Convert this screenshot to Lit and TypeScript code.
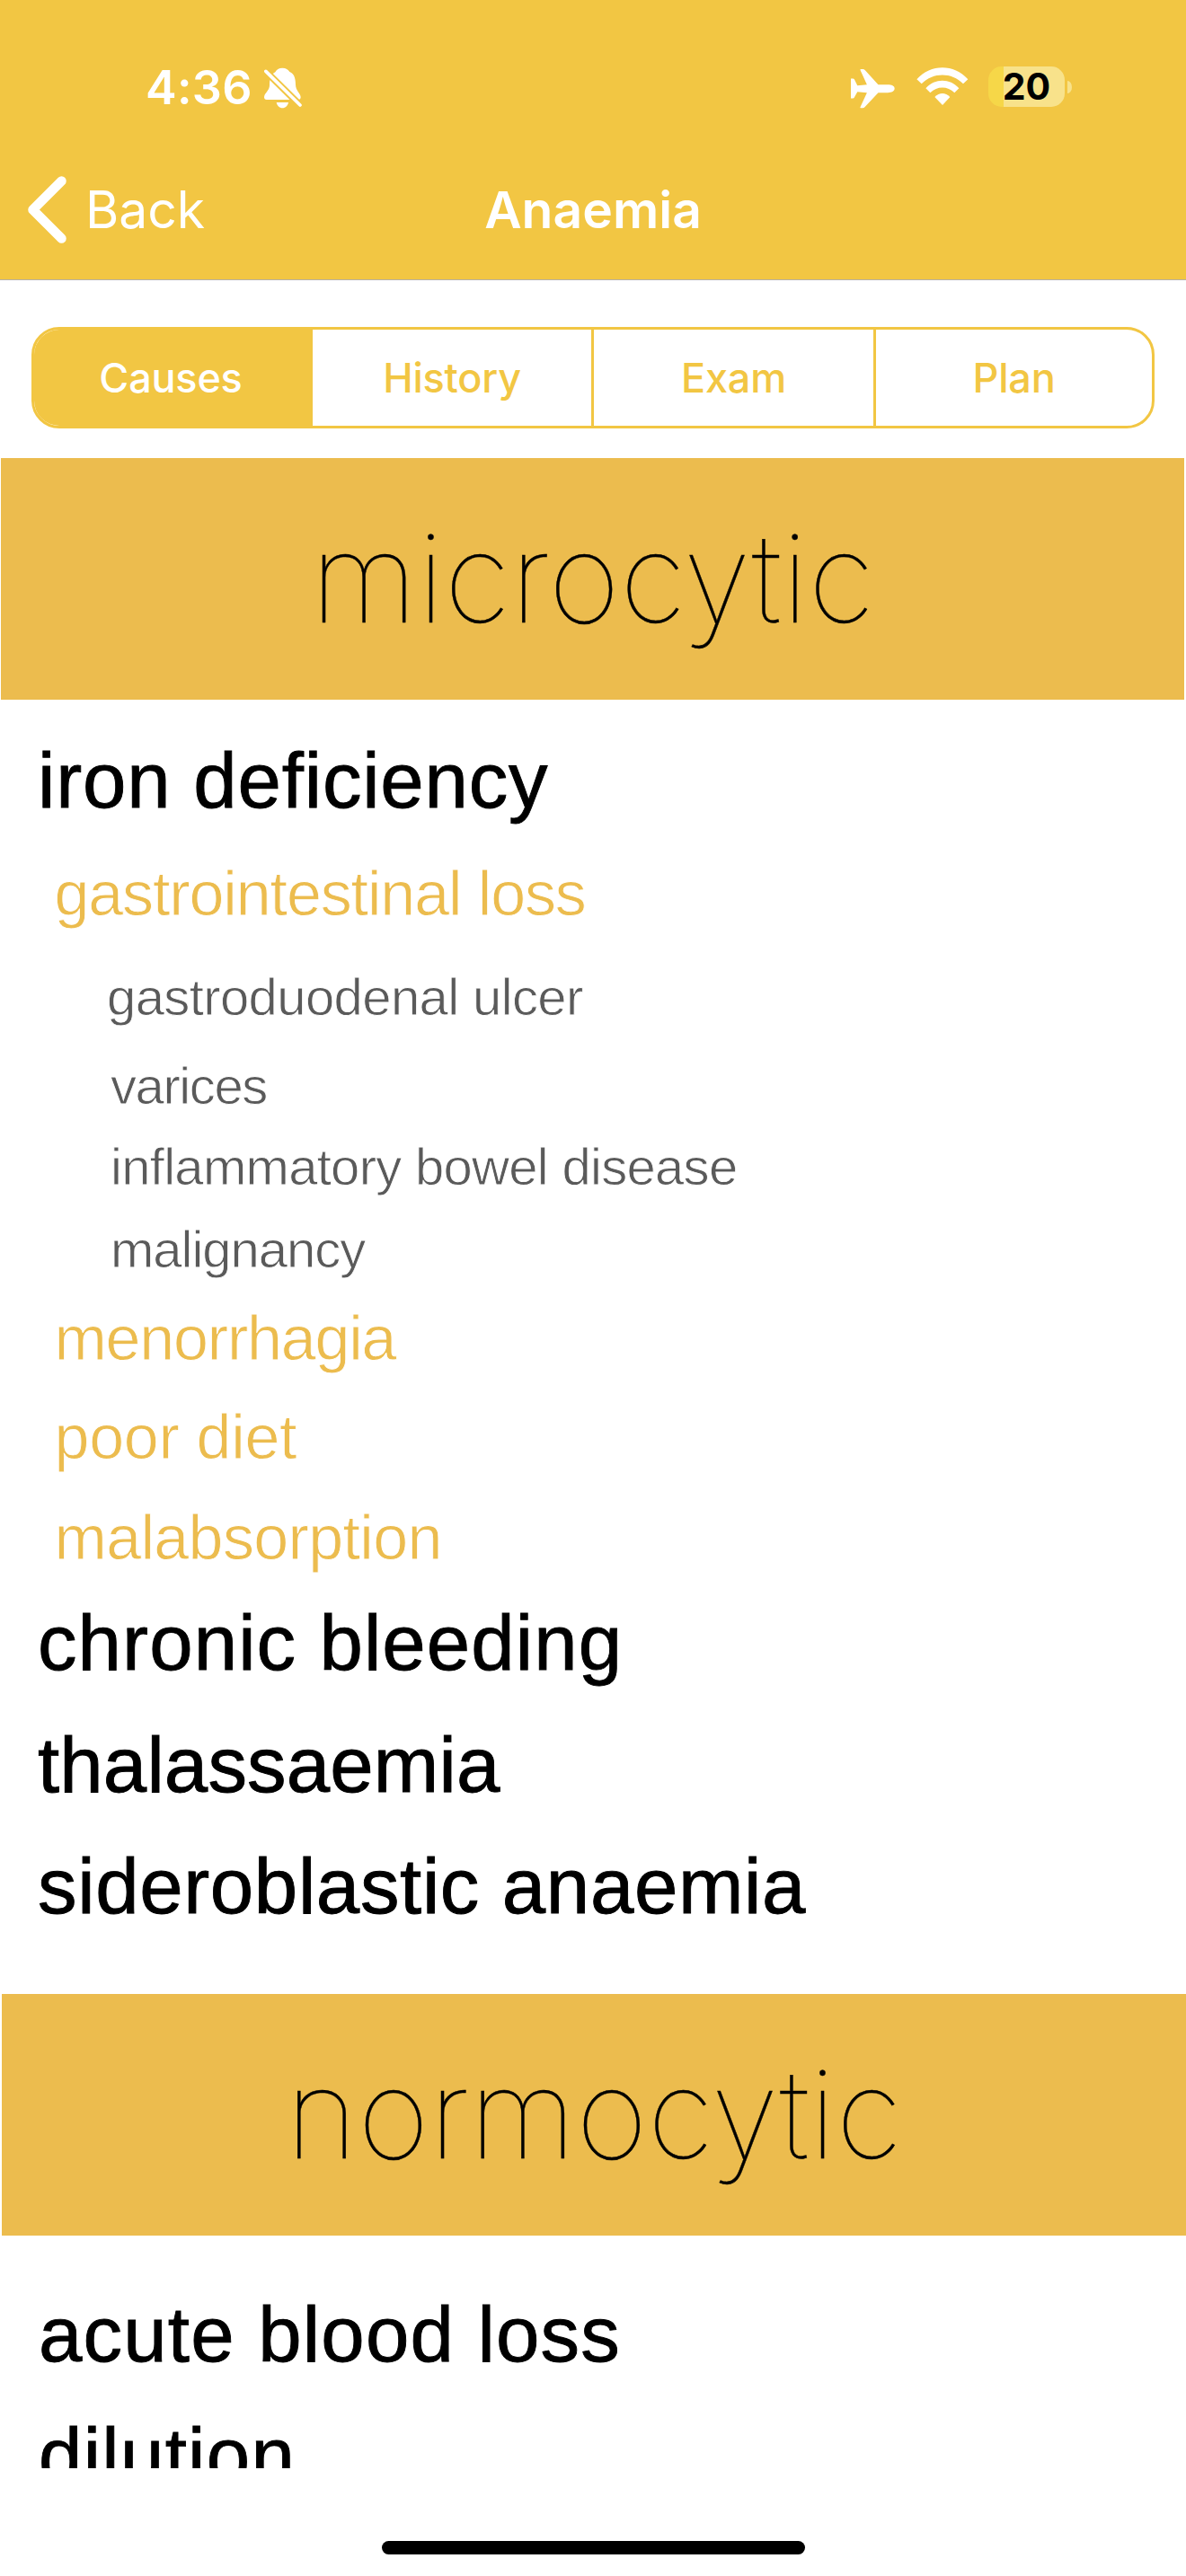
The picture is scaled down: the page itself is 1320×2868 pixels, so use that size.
import { LitElement, html, css, svg } from "lit";
import { customElement, property, state } from "lit/decorators.js";
import { classMap } from "lit/directives/class-map.js";
import { styleMap } from "lit/directives/style-map.js";

type Level = "cause" | "group" | "detail";

interface Entry {
  level: Level;
  text: string;
  /** letter spacing in px */
  tracking: number;
  /** space above the row in px */
  gap: number;
  nudge?: boolean;
}

interface Section {
  title: string;
  entries: Entry[];
}

const SECTIONS: Section[] = [
  {
    title: "microcytic",
    entries: [
      { level: "cause", text: "iron deficiency", tracking: 0.82, gap: 22 },
      { level: "group", text: "gastrointestinal loss", tracking: -1.12, gap: 3 },
      { level: "detail", text: "gastroduodenal ulcer", tracking: -0.6, gap: 13, nudge: true },
      { level: "detail", text: "varices", tracking: -1.4, gap: 8 },
      { level: "detail", text: "inflammatory bowel disease", tracking: -0.7, gap: -1 },
      { level: "detail", text: "malignancy", tracking: -1, gap: 1 },
      { level: "group", text: "menorrhagia", tracking: -1.2, gap: -1 },
      { level: "group", text: "poor diet", tracking: -0.3, gap: -1 },
      { level: "group", text: "malabsorption", tracking: -0.65, gap: 1 },
      { level: "cause", text: "chronic bleeding", tracking: 1.1, gap: -7 },
      { level: "cause", text: "thalassaemia", tracking: 0.15, gap: 0 },
      { level: "cause", text: "sideroblastic anaemia", tracking: 0.65, gap: -1 },
    ],
  },
  {
    title: "normocytic",
    entries: [
      { level: "cause", text: "acute blood loss", tracking: 1.2, gap: 42 },
      { level: "cause", text: "dilution", tracking: 1.3, gap: -1 },
    ],
  },
];

@customElement("status-bar")
class StatusBar extends LitElement {
  static styles = css`
    :host {
      display: flex;
      align-items: center;
      height: 84px;
      padding: 56px 127px 0 162px;
      color: #fff;
    }
    .time {
      font-size: 52px;
      font-weight: 600;
      letter-spacing: 0.3px;
      line-height: 84px;
      margin-right: 13px;
    }
    svg {
      display: block;
      fill: currentColor;
    }
    .bell {
      width: 42px;
      height: 46px;
    }
    .right {
      display: flex;
      align-items: center;
      margin-left: auto;
    }
    .plane {
      width: 49px;
      height: 45px;
      margin-right: 24px;
    }
    .wifi {
      width: 57.7px;
      height: 42.3px;
      margin: 0 22.5px 4px 0;
    }
    .battery {
      width: 85px;
      height: 45px;
      border-radius: 15px;
      margin-bottom: 3px;
      background: linear-gradient(90deg, #f6d748 17px, #f8e28b 17px);
      color: #000;
      font-size: 41px;
      font-weight: 700;
      line-height: 45px;
      text-align: center;
    }
    .cap {
      width: 5px;
      height: 14px;
      margin: 0 0 3px 3px;
      border-radius: 0 5px 5px 0 / 0 7px 7px 0;
      background: #f8e28b;
    }
  `;

  render() {
    return html`
      <span class="time">4:36</span>
      <svg class="bell" viewBox="42 30 126 138">
        ${svg`
          <mask id="cut" maskUnits="userSpaceOnUse" x="30" y="20" width="150" height="160">
            <rect x="30" y="20" width="150" height="160" fill="#fff" />
            <path d="M35 31 L175 169" stroke="#000" stroke-width="23" />
          </mask>
          <g mask="url(#cut)">
            <path d="M103 32C91 32 83 38 79 46C65 53 60 68 60 90C60 108 42 116 42 130C42 135 45 138 50 138L156 138C161 138 164 135 164 130C164 118 147 108 147 88C147 62 140 50 127 45C122 37 115 32 103 32Z" />
          </g>
          <path d="M83 147H123C121 158 113 166 103 166C93 166 85 158 83 147Z" />
          <path d="M47.500 43L162 156" stroke="currentColor" stroke-width="11" stroke-linecap="round" />
        `}
      </svg>
      <div class="right">
        <svg class="plane" viewBox="36 32 148 134">
          <path d="M183 99C183 108 173 113 160 113L128 113L84 160Q80 165 76 165L69 165Q66 165 68 161L90 113L58 110L47 130Q46 132 43 132L36 132L36 66L43 66Q46 66 48 69L58 89L90 86L68 38Q66 34 70 34L77 34Q80 34 84 38L128 86L160 86C173 86 183 90 183 99Z" />
        </svg>
        <svg class="wifi" viewBox="254 30 173 127">
          <path d="M255 70C302 18 379 18 426 70L410 85C371 46 310 46 271 85Z" />
          <path d="M285 100C316 66 365 66 396 100L381 115C358 92 323 92 300 115Z" />
          <path d="M315 129C330 113 351 113 366 129L341 156Z" />
        </svg>
        <div class="battery">20</div>
        <div class="cap"></div>
      </div>
    `;
  }
}

@customElement("nav-bar")
class NavBar extends LitElement {
  @property() heading = "";

  static styles = css`
    :host {
      display: grid;
      grid-template-columns: 1fr auto 1fr;
      align-items: center;
      box-sizing: border-box;
      height: 171px;
      padding-top: 16px;
      color: #fff;
      font-size: 57px;
      line-height: 70px;
    }
    .back {
      display: flex;
      align-items: center;
      gap: 21px;
      padding-left: 31px;
    }
    svg {
      display: block;
      width: 43px;
      height: 75px;
    }
    .title {
      font-weight: 600;
    }
  `;

  render() {
    return html`
      <div class="back">
        <svg viewBox="0 0 43 75" fill="none" stroke="#fff" stroke-width="10.500" stroke-linecap="round" stroke-linejoin="round">
          <path d="M37.500 5.500L5.500 37.500L37.500 69.500" />
        </svg>
        <span>Back</span>
      </div>
      <span class="title">${this.heading}</span>
    `;
  }
}

@customElement("segmented-tabs")
class SegmentedTabs extends LitElement {
  @property({ attribute: false }) tabs: string[] = [];
  @state() private active = 0;

  static styles = css`
    :host {
      display: block;
      padding: 52px 35px 33px;
    }
    .bar {
      display: grid;
      grid-template-columns: 310px 310px 314px 310px;
      box-sizing: border-box;
      height: 113px;
      border: 3px solid #f2c643;
      border-radius: 31px;
      overflow: hidden;
    }
    .tab {
      color: #f2c643;
      font-size: 45px;
      font-weight: 500;
      letter-spacing: -0.2px;
      line-height: 107px;
      text-align: center;
    }
    .tab:nth-child(n + 3) {
      border-left: 3px solid #f2c643;
    }
    .tab:first-child {
      padding-right: 6px;
    }
    .active {
      background: #f2c643;
      color: #fff;
    }
  `;

  render() {
    return html`<div class="bar">
      ${this.tabs.map(
        (label, i) => html`<div
          class=${classMap({ tab: true, active: i === this.active })}
          @click=${() => (this.active = i)}
        >${label}</div>`
      )}
    </div>`;
  }
}

@customElement("cause-section")
class CauseSection extends LitElement {
  @property({ attribute: false }) section!: Section;

  static styles = css`
    :host {
      display: flow-root;
      font-family: "Liberation Sans", Arial, sans-serif;
    }
    .band {
      height: 269px;
      background: #ecbc4e;
      color: #000;
      font-family: Inter, sans-serif;
      font-size: 137px;
      font-weight: 100;
      letter-spacing: 0.2px;
      line-height: 266px;
      text-align: center;
      -webkit-text-stroke: 0.4px #000;
    }
    .row {
      white-space: nowrap;
    }
    .cause {
      padding-left: 41px;
      font-size: 87px;
      line-height: 136px;
      color: #000;
      -webkit-text-stroke: 0.9px #000;
    }
    .group {
      padding-left: 59.5px;
      font-size: 70px;
      line-height: 111px;
      color: #ecbc4e;
      -webkit-text-stroke: 0.8px #fff;
    }
    .detail {
      padding-left: 122px;
      font-size: 58px;
      line-height: 91px;
      color: #5a5a5a;
      -webkit-text-stroke: 0.8px #fff;
    }
    .nudge {
      padding-left: 118px;
    }
  `;

  render() {
    return html`
      <div class="band">${this.section.title}</div>
      ${this.section.entries.map(
        (e) => html`<div
          class=${classMap({ row: true, [e.level]: true, nudge: !!e.nudge })}
          style=${styleMap({ letterSpacing: `${e.tracking}px`, marginTop: `${e.gap}px` })}
        >${e.text}</div>`
      )}
    `;
  }
}

@customElement("app-root")
class AppRoot extends LitElement {
  static styles = css`
    :host {
      display: flex;
      flex-direction: column;
      width: 1320px;
      height: 2868px;
      overflow: hidden;
      background: #fff;
      font-family: Inter, sans-serif;
    }
    header {
      background: #f2c643;
      border-bottom: 1px solid #b5b1a8;
    }
    main {
      flex: 1;
      min-height: 0;
      overflow: hidden;
    }
    .first {
      padding: 0 2px 0 1px;
    }
    .second {
      padding: 52px 0 0 2px;
    }
    footer {
      display: flex;
      justify-content: center;
      height: 120px;
      padding-top: 81px;
      box-sizing: border-box;
    }
    .home {
      width: 471px;
      height: 15px;
      border-radius: 8px;
      background: #000;
    }
  `;

  render() {
    return html`
      <header>
        <status-bar></status-bar>
        <nav-bar heading="Anaemia"></nav-bar>
      </header>
      <segmented-tabs .tabs=${["Causes", "History", "Exam", "Plan"]}></segmented-tabs>
      <main>
        <cause-section class="first" .section=${SECTIONS[0]}></cause-section>
        <cause-section class="second" .section=${SECTIONS[1]}></cause-section>
      </main>
      <footer><div class="home"></div></footer>
    `;
  }
}
